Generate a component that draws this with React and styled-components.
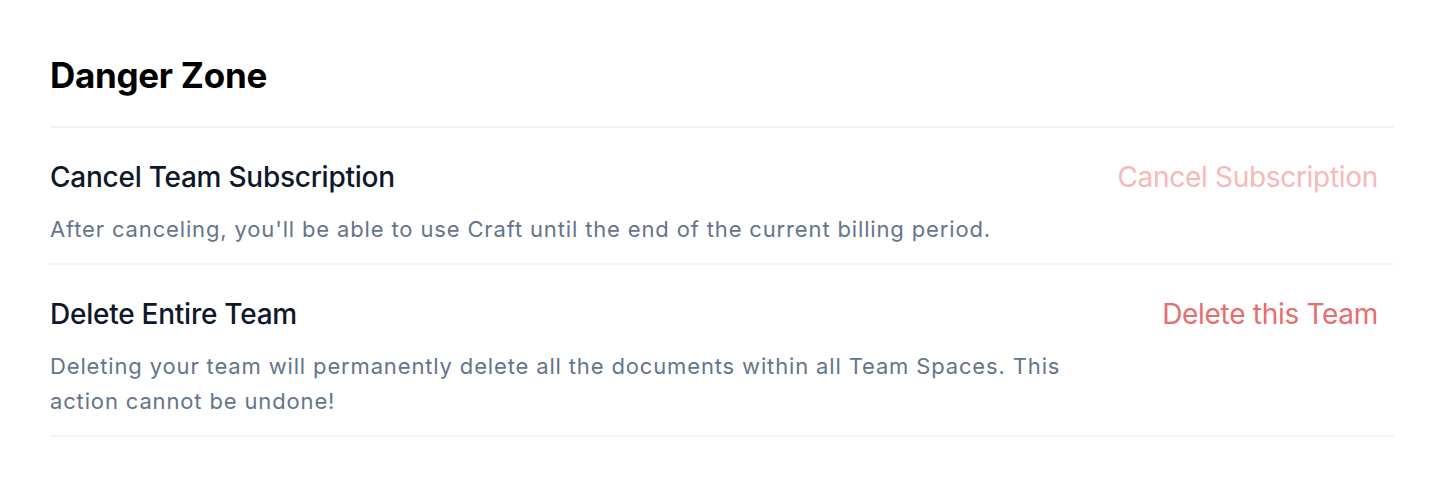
import React from "react";
import styled, { createGlobalStyle } from "styled-components";

const GlobalStyle = createGlobalStyle`
  body {
    margin: 0;
    background: #ffffff;
    font-family: Inter, "Noto Sans", sans-serif;
    -webkit-font-smoothing: antialiased;
  }
`;

const Page = styled.div`
  padding: 55px 60px 40px 50px;
`;

const Heading = styled.h2`
  margin: 0 0 31px;
  font-size: 35px;
  line-height: 40px;
  font-weight: 700;
  color: #000000;
  letter-spacing: -0.3px;
`;

const List = styled.div`
  border-top: 2px solid #f1f4f8;
`;

const Row = styled.div`
  display: flex;
  align-items: flex-start;
  justify-content: space-between;
  gap: 24px;
  padding: 31px 0 16px;
  border-bottom: 2px solid #f1f4f8;
`;

const Text = styled.div`
  display: flex;
  flex-direction: column;
  gap: 17px;
  max-width: 1040px;
`;

const Title = styled.div`
  font-size: 28px;
  line-height: 36px;
  font-weight: 500;
  letter-spacing: -0.25px;
  color: #0f172a;
`;

const Description = styled.div`
  font-size: 22px;
  line-height: 35px;
  letter-spacing: 0.85px;
  color: #64748b;
`;

const ActionButton = styled.button`
  border: none;
  background: transparent;
  padding: 0 16px;
  font-family: inherit;
  font-size: 28px;
  line-height: 36px;
  letter-spacing: -0.3px;
  color: ${(p) => (p.$muted ? "#f6b8b8" : "#e86d6d")};
  cursor: pointer;
  white-space: nowrap;
`;

const items = [
  {
    id: "cancel",
    title: "Cancel Team Subscription",
    text: "After canceling, you'll be able to use Craft until the end of the current billing period.",
    action: "Cancel Subscription",
    muted: true,
  },
  {
    id: "delete",
    title: "Delete Entire Team",
    text: "Deleting your team will permanently delete all the documents within all Team Spaces. This action cannot be undone!",
    action: "Delete this Team",
    muted: false,
  },
];

const App = () => {
  return (
    <Page>
      <GlobalStyle />
      <Heading>Danger Zone</Heading>
      <List>
        {items.map((item) => (
          <Row key={item.id}>
            <Text>
              <Title>{item.title}</Title>
              <Description>{item.text}</Description>
            </Text>
            <ActionButton $muted={item.muted}>{item.action}</ActionButton>
          </Row>
        ))}
      </List>
    </Page>
  );
};

export default App;
